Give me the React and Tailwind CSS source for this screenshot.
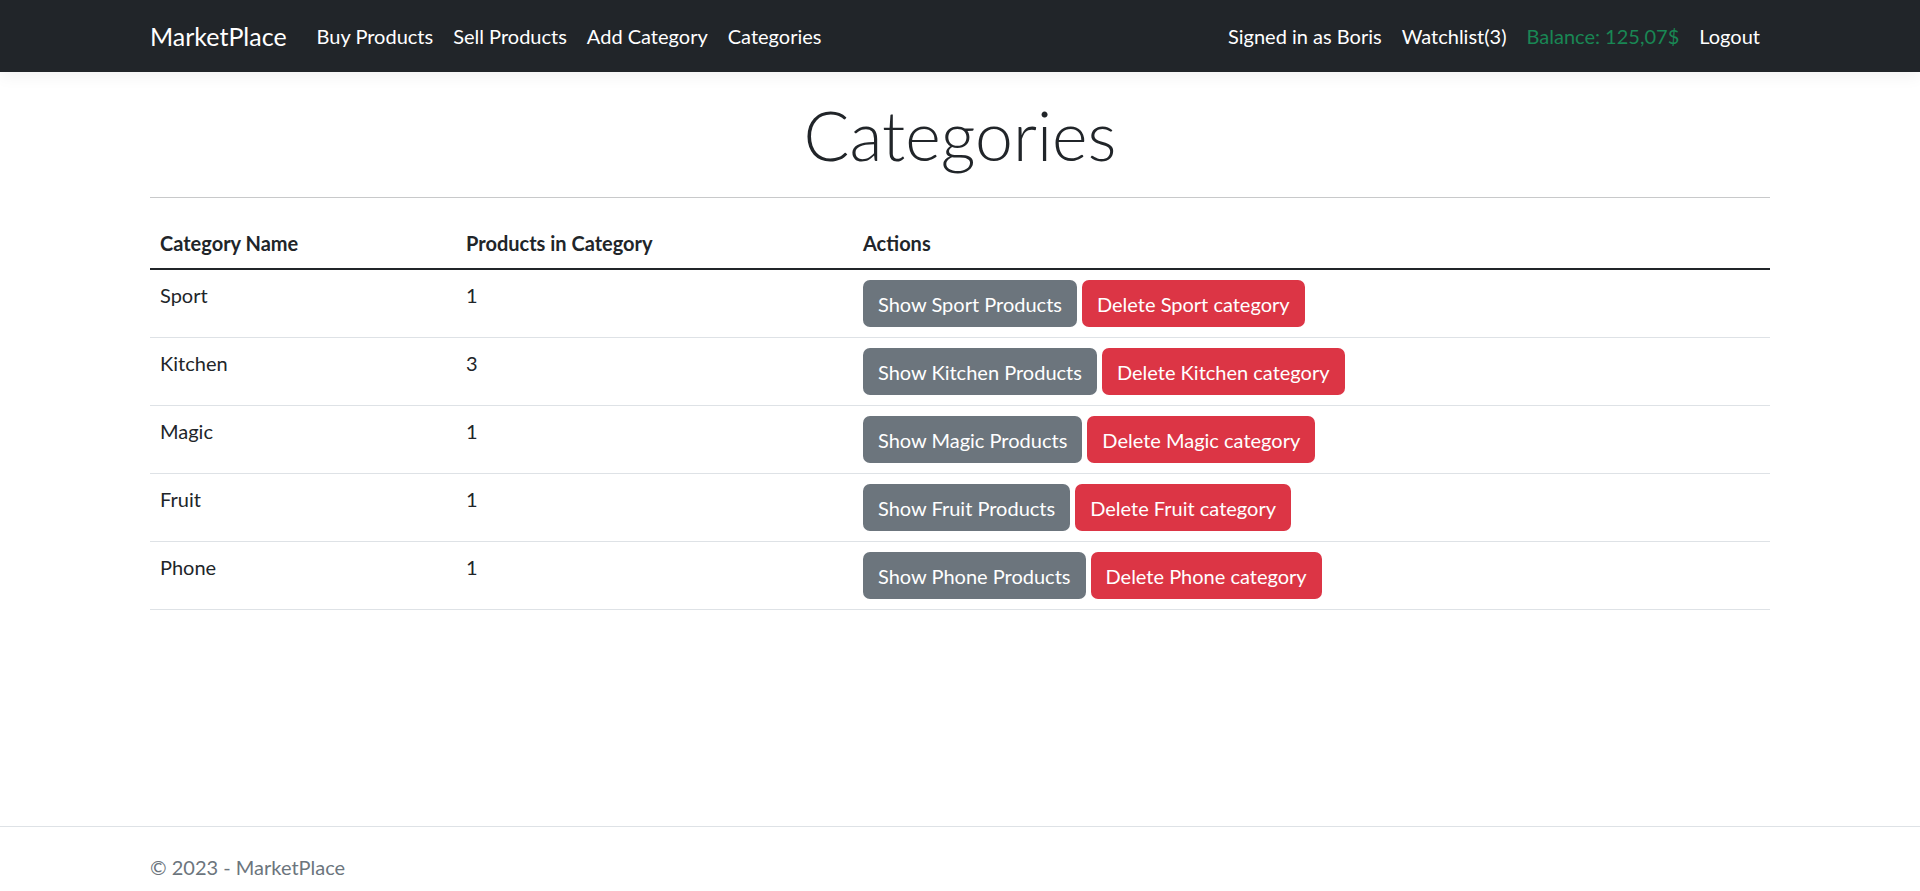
import React from 'react';

const categories = [
    { name: 'Sport', count: 1 },
    { name: 'Kitchen', count: 3 },
    { name: 'Magic', count: 1 },
    { name: 'Fruit', count: 1 },
    { name: 'Phone', count: 1 },
];

const navLeft = ['Buy Products', 'Sell Products', 'Add Category', 'Categories'];

const App = () => {
    return (
        <div className="h-screen flex flex-col overflow-hidden bg-white text-[#212529] font-['Lato',sans-serif] text-[20px] leading-[30px]">
            {/* Navbar */}
            <header className="h-[72px] shrink-0 bg-[#212529] shadow-[0_5px_15px_rgba(0,0,0,0.05)] mb-[21px]">
                <div className="w-[1620px] mx-auto h-full flex items-center">
                    <a href="#" className="text-white text-[25px] leading-[37px] mr-[20px]">MarketPlace</a>
                    <nav className="flex items-center">
                        {navLeft.map((item) => (
                            <a key={item} href="#" className="px-[10px] py-[10px] text-white">{item}</a>
                        ))}
                    </nav>
                    <nav className="ml-auto flex items-center">
                        <span className="px-[10px] py-[10px] text-white">Signed in as Boris</span>
                        <a href="#" className="px-[10px] py-[10px] text-white">Watchlist(3)</a>
                        <span className="px-[10px] py-[10px] text-[#198754]">Balance: 125,07$</span>
                        <a href="#" className="px-[10px] py-[10px] text-white">Logout</a>
                    </nav>
                </div>
            </header>

            {/* Page content */}
            <main className="flex-1">
                <div className="w-[1620px] mx-auto">
                    <h1 className="text-center text-[68px] leading-[84px] font-light">Categories</h1>
                    <hr className="my-[20px] border-t border-[#c8c9ca]" />
                    <table className="w-full border-collapse text-left">
                        <thead>
                            <tr className="border-b-2 border-[#212529]">
                                <th className="w-[306px] px-[10px] py-[10px] font-bold">Category Name</th>
                                <th className="w-[397px] px-[10px] py-[10px] font-bold">Products in Category</th>
                                <th className="px-[10px] py-[10px] font-bold">Actions</th>
                            </tr>
                        </thead>
                        <tbody>
                            {categories.map((c) => (
                                <tr key={c.name} className="border-b border-[#dee2e6]">
                                    <td className="px-[10px] py-[10px] align-top">{c.name}</td>
                                    <td className="px-[10px] py-[10px] align-top">{c.count}</td>
                                    <td className="px-[10px] py-[10px] align-top">
                                        <div className="flex gap-[5px]">
                                            <button className="h-[47px] px-[15px] rounded-[7px] bg-[#6c757d] text-white">
                                                Show {c.name} Products
                                            </button>
                                            <button className="h-[47px] px-[15px] rounded-[7px] bg-[#dc3545] text-white">
                                                Delete {c.name} category
                                            </button>
                                        </div>
                                    </td>
                                </tr>
                            ))}
                        </tbody>
                    </table>
                </div>
            </main>

            {/* Footer */}
            <footer className="h-[65px] shrink-0 border-t border-[#dee2e6] overflow-hidden">
                <div className="w-[1620px] mx-auto leading-[80px] text-[#6c757d] whitespace-nowrap">
                    &copy; 2023 - MarketPlace
                </div>
            </footer>
        </div>
    );
};

export default App;
